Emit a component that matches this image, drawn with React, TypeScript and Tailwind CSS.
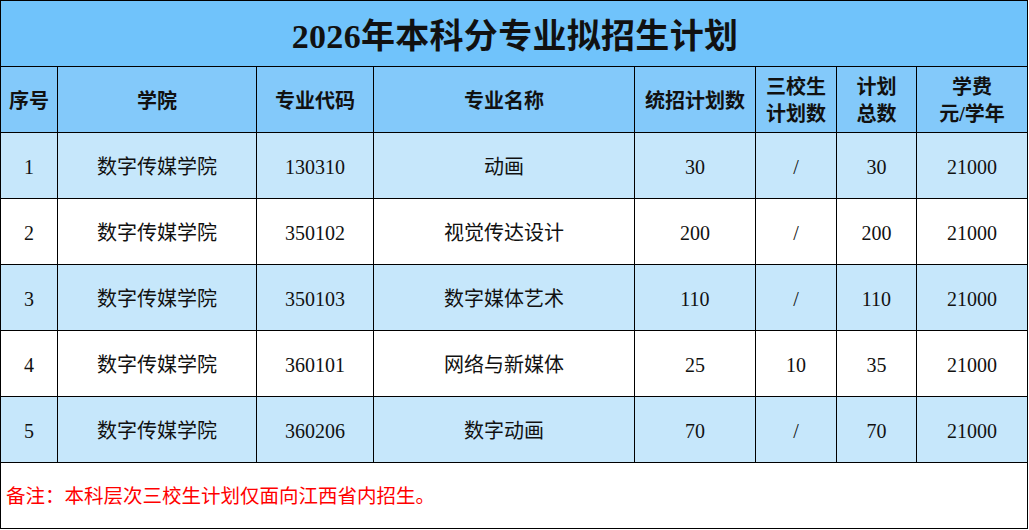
import React from "react";

type Row = {
  no: string;
  school: string;
  code: string;
  major: string;
  unified: string;
  sanxiao: string;
  total: string;
  fee: string;
};

const rows: Row[] = [
  { no: "1", school: "数字传媒学院", code: "130310", major: "动画", unified: "30", sanxiao: "/", total: "30", fee: "21000" },
  { no: "2", school: "数字传媒学院", code: "350102", major: "视觉传达设计", unified: "200", sanxiao: "/", total: "200", fee: "21000" },
  { no: "3", school: "数字传媒学院", code: "350103", major: "数字媒体艺术", unified: "110", sanxiao: "/", total: "110", fee: "21000" },
  { no: "4", school: "数字传媒学院", code: "360101", major: "网络与新媒体", unified: "25", sanxiao: "10", total: "35", fee: "21000" },
  { no: "5", school: "数字传媒学院", code: "360206", major: "数字动画", unified: "70", sanxiao: "/", total: "70", fee: "21000" },
];

const font = { fontFamily: '"Liberation Serif", "Noto Sans CJK SC", serif' };

export default function App() {
  const cell = "border border-black text-center align-middle p-0 pt-[3px]";
  return (
    <div className="w-[1029px] h-[530px] bg-white" style={font}>
      <table className="table-fixed border-collapse w-[1028px] text-[#111]">
        <colgroup>
          <col className="w-[57px]" />
          <col className="w-[199px]" />
          <col className="w-[117px]" />
          <col className="w-[261px]" />
          <col className="w-[121px]" />
          <col className="w-[81px]" />
          <col className="w-[80px]" />
          <col className="w-[111px]" />
        </colgroup>
        <tbody>
          <tr className="h-[66px] bg-[#70c3fb]">
            <td colSpan={8} className="border border-black text-center align-middle pt-[5px] pl-[2px] text-[34px] font-bold tracking-[0.3px]">
              2026年本科分专业拟招生计划
            </td>
          </tr>
          <tr className="h-[66px] bg-[#83c9fa] text-[20px] font-bold leading-[27px]">
            <td className={cell}>序号</td>
            <td className={cell}>学院</td>
            <td className={cell}>专业代码</td>
            <td className={cell}>专业名称</td>
            <td className={cell}>统招计划数</td>
            <td className={cell}>三校生<br />计划数</td>
            <td className={cell}>计划<br />总数</td>
            <td className={cell}>学费<br />元/学年</td>
          </tr>
          {rows.map((r, i) => (
            <tr
              key={r.no}
              className={`h-[66px] text-[20px] ${i % 2 === 0 ? "bg-[#c6e7fb]" : "bg-white"}`}
            >
              <td className={cell}>{r.no}</td>
              <td className={cell}>{r.school}</td>
              <td className={cell}>{r.code}</td>
              <td className={cell}>{r.major}</td>
              <td className={cell}>{r.unified}</td>
              <td className={cell}>{r.sanxiao}</td>
              <td className={cell}>{r.total}</td>
              <td className={cell}>{r.fee}</td>
            </tr>
          ))}
          <tr className="h-[66px] bg-white">
            <td colSpan={8} className="border border-black align-middle pl-[5px] pt-[2px] text-left text-[19.5px] text-[#ff0000]">
              备注：本科层次三校生计划仅面向江西省内招生。
            </td>
          </tr>
        </tbody>
      </table>
    </div>
  );
}
